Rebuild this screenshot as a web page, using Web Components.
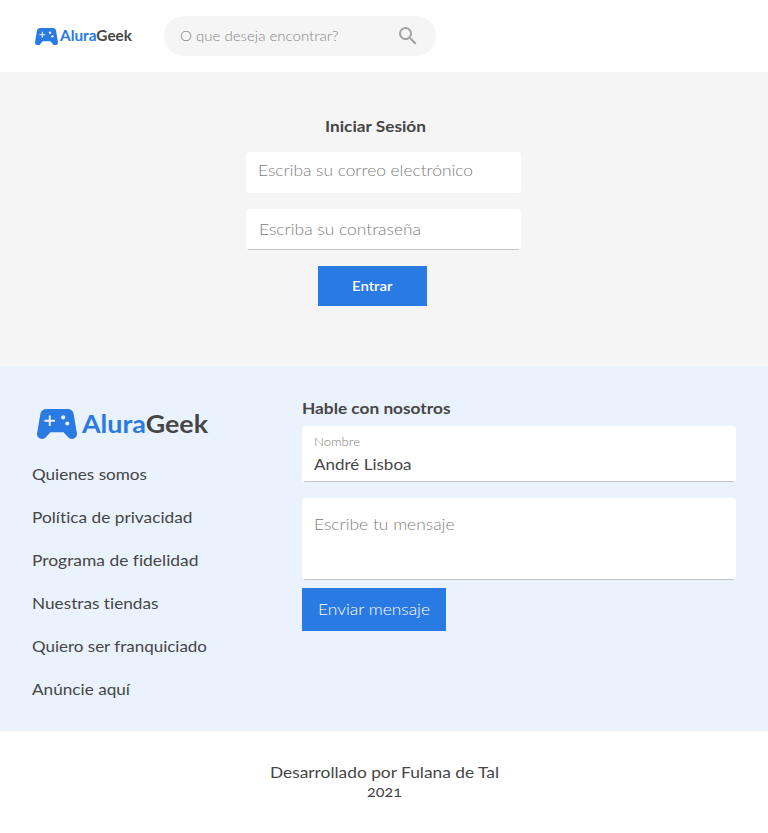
<!DOCTYPE html>
<html lang="es">
<head>
<meta charset="utf-8">
<title>AluraGeek</title>
<style>
body{margin:0;background:#fff;color:#464646;font-family:Lato,"Open Sans",sans-serif;font-size:16px;font-variant-numeric:oldstyle-nums;font-variant-ligatures:none}
</style>
</head>
<body>
<geek-page></geek-page>
<script>
const define = (name, html, setup) => {
  const tpl = document.createElement('template');
  tpl.innerHTML = html;
  customElements.define(name, class extends HTMLElement {
    constructor() {
      super();
      this.attachShadow({mode: 'open'}).append(tpl.content.cloneNode(true));
    }
    connectedCallback() { if (setup) setup(this); }
  });
};

/* One line of text, widened so that it spans the given width. */
define('fit-text', `
<style>:host{display:block;white-space:nowrap;width:max-content}span{display:inline-block;transform-origin:0 50%}</style>
<span><slot></slot></span>`, el => {
  const span = el.shadowRoot.querySelector('span');
  requestAnimationFrame(() => {
    const target = parseFloat(el.getAttribute('w'));
    const natural = span.getBoundingClientRect().width;
    el.style.width = target + 'px';
    span.style.transform = `scaleX(${target / natural})`;
  });
});

define('geek-logo', `
<style>
:host{display:flex;align-items:flex-start;font-weight:700}
svg{display:block;width:var(--pad,40px);height:auto;fill:#2a7ae4;flex:none}
b{color:#2a7ae4;font-weight:inherit}
fit-text{margin:var(--shift,-1px) 0 0 var(--gap,5px);font-size:var(--size,25px);line-height:var(--line,30px)}
</style>
<svg viewBox="0 0 40 30"><path d="M10 0H30.500C34 0 36 1.800 36.600 4.800L39.900 24.300C40.400 27.400 38 30 35 30C33.500 30 32.200 29.400 31.200 28.300L26.500 23.200H13.500L8.800 28.300C7.800 29.400 6.500 30 5 30C2 30-.400 27.400.1 24.300L3.400 4.800C4 1.800 6 0 10 0Z"/><path fill="#eaf2fd" d="M11.800 6.500h1.900v4.300H18v1.900h-4.300v4.300h-1.900v-4.300H7.500v-1.900h4.300z"/><circle cx="26.200" cy="8.400" r="2.100" fill="#eaf2fd"/><circle cx="30.300" cy="14.500" r="2.100" fill="#eaf2fd"/></svg>
<fit-text><b>Alura</b>Geek</fit-text>`, el => {
  el.shadowRoot.querySelector('fit-text').setAttribute('w', el.getAttribute('w'));
});

define('geek-search', `
<style>
:host{display:flex;box-sizing:border-box;width:272px;height:40px;border-radius:20px;background:#f5f5f5;color:#858585;padding:0 16px;align-items:center;justify-content:space-between;font-size:14px;font-weight:300}
svg{width:24px;height:24px;fill:#a2a2a2}
::slotted(fit-text){margin-top:-2px}
</style>
<slot></slot>
<svg viewBox="0 0 24 24"><path d="M15.500 14h-.790l-.280-.270A6.471 6.471 0 0 0 16 9.500 6.500 6.500 0 1 0 9.500 16c1.610 0 3.090-.590 4.230-1.570l.270.280v.790l5 4.990L20.490 19l-4.990-5zm-6 0C7.010 14 5 11.990 5 9.500S7.010 5 9.500 5 14 7.010 14 9.500 11.990 14 9.500 14z"/></svg>`);

define('geek-header', `
<style>:host{display:flex;box-sizing:border-box;height:72px;padding:16px 32px 16px 35px}
geek-logo{--pad:23px;--gap:2px;--size:14.500px;--line:17px;--shift:-.500px;width:129px;margin-top:11.500px}</style>
<geek-logo w="72"></geek-logo>
<geek-search><fit-text w="158.500">O que deseja encontrar?</fit-text></geek-search>`);

define('geek-field', `
<style>
:host{display:block;box-sizing:border-box;background:#fff;border-radius:4px;overflow:hidden;padding:0 12px;font-weight:300;color:#808080}
:host([line]){background:linear-gradient(#c4c4c4,#c4c4c4) 2px 100%/calc(100% - 4px) 1px no-repeat,linear-gradient(#fff,#fff) 0 0/100% calc(100% - 1px) no-repeat}
</style><slot></slot>`);

define('geek-button', `
<style>:host{display:flex;box-sizing:border-box;align-items:center;justify-content:center;background:#2a7ae4;color:#fff;padding-bottom:2px}</style><slot></slot>`);

define('geek-login', `
<style>
:host{display:flex;flex-direction:column;align-items:center;box-sizing:border-box;height:295px;background:#f5f5f5;padding-top:44px}
h1{margin:0 18px 16px 0;font-size:16px;line-height:20px;font-weight:700}
geek-field{width:275px;height:41px;line-height:35px;margin:0 1px 16px 0}
.pass{line-height:40px;padding-left:13px}
geek-button{width:109px;height:40px;font-size:14px;font-weight:600;margin-right:23px}
</style>
<h1><fit-text w="101">Iniciar Sesión</fit-text></h1>
<geek-field><fit-text w="215">Escriba su correo electrónico</fit-text></geek-field>
<geek-field class="pass" line><fit-text w="162">Escriba su contraseña</fit-text></geek-field>
<geek-button><fit-text w="40.500">Entrar</fit-text></geek-button>`);

define('geek-links', `
<style>
:host{display:flex;flex-direction:column;width:270px}
geek-logo{margin:10px 0 25px 5px}
nav{display:grid;gap:24px;line-height:19px}
</style>
<geek-logo w="126"></geek-logo>
<nav>
<fit-text w="115">Quienes somos</fit-text>
<fit-text w="160.500">Política de privacidad</fit-text>
<fit-text w="166.500">Programa de fidelidad</fit-text>
<fit-text w="126.500">Nuestras tiendas</fit-text>
<fit-text w="175">Quiero ser franquiciado</fit-text>
<fit-text w="98">Anúncie aquí</fit-text>
</nav>`);

define('geek-contact', `
<style>
:host{display:block;flex:1}
h2{margin:-1px 0 9px;font-size:16px;line-height:19px;font-weight:700}
.name{height:56px;margin-bottom:16px;padding-top:8px}
.name fit-text:first-child{font-size:12px;line-height:16px}
.name fit-text:last-child{line-height:24px;margin-top:2px;color:#464646;font-weight:400}
.message{height:82px;padding-top:15px;line-height:22px;margin-bottom:8px}
geek-button{width:144px;height:43px;font-weight:300}
</style>
<h2><fit-text w="148.500">Hable con nosotros</fit-text></h2>
<geek-field class="name" line><fit-text w="46">Nombre</fit-text><fit-text w="97.500">André Lisboa</fit-text></geek-field>
<geek-field class="message" line><fit-text w="140.500">Escribe tu mensaje</fit-text></geek-field>
<geek-button><fit-text w="112">Enviar mensaje</fit-text></geek-button>`);

define('geek-footer', `
<style>
:host{display:block}
section{display:flex;box-sizing:border-box;height:364px;background:#eaf2fd;padding:32px}
footer{display:flex;flex-direction:column;align-items:center;padding:31px 0 32px;line-height:19px}
</style>
<section><geek-links></geek-links><geek-contact></geek-contact></section>
<footer><fit-text w="229">Desarrollado por Fulana de Tal</fit-text><fit-text w="35">2021</fit-text></footer>`);

define('geek-page', `
<style>:host{display:block}</style>
<geek-header></geek-header><geek-login></geek-login><geek-footer></geek-footer>`);
</script>
</body>
</html>
